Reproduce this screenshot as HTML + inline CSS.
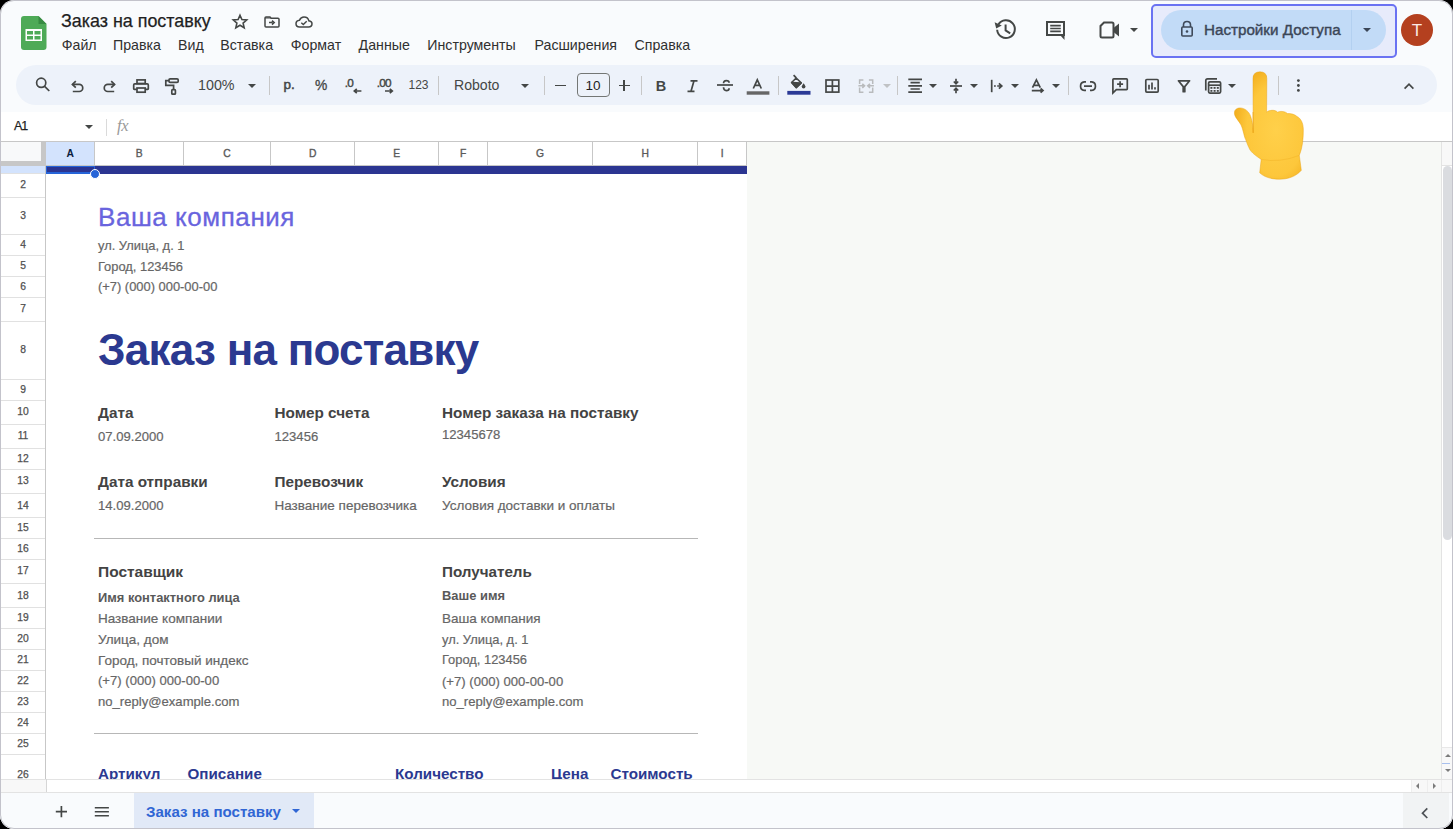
<!DOCTYPE html>
<html><head><meta charset="utf-8">
<style>
*{box-sizing:border-box;margin:0;padding:0}
html,body{width:1453px;height:829px;overflow:hidden;background:#000}
body{font-family:"Liberation Sans",sans-serif;position:relative}
#win{position:absolute;left:0;top:0;width:1453px;height:829px;border-radius:14px;overflow:hidden;background:#f9fbfd}
#frame{position:absolute;left:0;top:0;width:1453px;height:829px;border-radius:14px;border:1px solid #c3c3cb;pointer-events:none}
.a{position:absolute}
.t{position:absolute;white-space:nowrap;line-height:1}
svg{position:absolute;overflow:visible}
.ic{fill:none;stroke:#444746;stroke-width:2}
.sep{position:absolute;width:1px;background:#c7c7c7}
.dd{position:absolute;width:0;height:0;border-left:4px solid transparent;border-right:4px solid transparent;border-top:4px solid #444746}
</style></head><body>
<div id="win">
  <!-- ============ HEADER ============ -->
  <!-- sheets logo -->
  <svg style="left:21px;top:16px" width="26" height="34" viewBox="0 0 26 34">
    <path d="M3 0 H17.5 L25.5 8 V31 Q25.5 34 22.5 34 H3 Q0 34 0 31 V3 Q0 0 3 0Z" fill="#4eaa57"/>
    <path d="M17.5 0 V8 H25.5Z" fill="#378b42"/>
    <rect x="4.5" y="13" width="16.5" height="12" fill="#fff"/>
    <rect x="6" y="15" width="6" height="3.5" fill="#4eaa57"/>
    <rect x="13.5" y="15" width="6" height="3.5" fill="#4eaa57"/>
    <rect x="6" y="20" width="6" height="3.5" fill="#4eaa57"/>
    <rect x="13.5" y="20" width="6" height="3.5" fill="#4eaa57"/>
  </svg>
  <div class="t" style="left:61px;top:13px;font-size:17.9px;color:#1f1f1f;-webkit-text-stroke:0.25px #1f1f1f">Заказ на поставку</div>
  <!-- star -->
  <svg style="left:232px;top:14px" width="16" height="15" viewBox="0 0 16 15">
    <path d="M8 1.2 L9.9 5.6 L14.7 6 L11.1 9.1 L12.2 13.8 L8 11.3 L3.8 13.8 L4.9 9.1 L1.3 6 L6.1 5.6Z" fill="none" stroke="#444746" stroke-width="1.6" stroke-linejoin="miter"/>
  </svg>
  <!-- folder move -->
  <svg style="left:264px;top:16px" width="16" height="12" viewBox="0 0 16 12">
    <path d="M1 2 Q1 1 2 1 H6 L7.2 2.2 H14 Q15 2.2 15 3.2 V10 Q15 11 14 11 H2 Q1 11 1 10Z" fill="none" stroke="#444746" stroke-width="1.5"/>
    <path d="M1 1.5 H6 L7.2 2.6 H1Z" fill="#444746"/>
    <path d="M5 6.6 H8.6 M8 4.6 L10.2 6.6 L8 8.6" fill="none" stroke="#444746" stroke-width="1.5"/>
  </svg>
  <!-- cloud done -->
  <svg style="left:295px;top:16px" width="18" height="12" viewBox="0 0 18 12">
    <path d="M4.5 11 H13.5 Q17 11 17 7.8 Q17 5 13.8 4.7 Q13 1 9 1 Q5.8 1 4.5 4.3 Q1 4.6 1 7.8 Q1 11 4.5 11Z" fill="none" stroke="#444746" stroke-width="1.5"/>
    <path d="M6.3 6.8 L8.3 8.6 L11.7 5.2" fill="none" stroke="#444746" stroke-width="1.4"/>
  </svg>
  <!-- menu -->
  <div class="t" style="left:62px;top:38px;font-size:14.2px;color:#303030">
    <span class="a" style="left:-0.3px">Файл</span><span class="a" style="left:51.0px">Правка</span><span class="a" style="left:116.0px">Вид</span><span class="a" style="left:158.3px">Вставка</span><span class="a" style="left:228.8px">Формат</span><span class="a" style="left:296.6px">Данные</span><span class="a" style="left:365.3px">Инструменты</span><span class="a" style="left:472.5px">Расширения</span><span class="a" style="left:572.5px">Справка</span></div>

  <!-- right header icons -->
  <!-- history -->
  <svg style="left:990px;top:15px" width="30" height="30" viewBox="990 15 30 30">
    <path d="M998.4 24.6 A8.85 8.85 0 1 1 997.15 29.8" fill="none" stroke="#444746" stroke-width="2"/>
    <path d="M994.6 22.2 L996.2 28.6 L1001.8 25.4Z" fill="#444746"/>
    <path d="M1005.6 24.4 V30.4 L1010.2 33.4" fill="none" stroke="#444746" stroke-width="2"/>
  </svg>
  <!-- comments -->
  <svg style="left:1045px;top:20px" width="22" height="22" viewBox="0 0 22 22">
    <path d="M2 2 H19 V15 H2Z" fill="none" stroke="#444746" stroke-width="2"/>
    <path d="M15 15 L19.5 20 V15Z" fill="#444746"/>
    <path d="M5.2 5.6 H15.8 M5.2 8.5 H15.8 M5.2 11.4 H15.8" stroke="#444746" stroke-width="1.7"/>
  </svg>
  <!-- meet -->
  <svg style="left:1099px;top:21px" width="22" height="18" viewBox="0 0 22 18">
    <path d="M5 1.5 H13 Q14.5 1.5 14.5 3 V15 Q14.5 16.5 13 16.5 H3 Q1.5 16.5 1.5 15 V5Z" fill="none" stroke="#444746" stroke-width="2"/>
    <path d="M14.5 7 L20 2.5 V15.5 L14.5 11Z" fill="#444746"/>
  </svg>
  <div class="dd" style="left:1130px;top:28px"></div>

  <!-- share highlight -->
  <div class="a" style="left:1151px;top:4px;width:246px;height:54px;border:2px solid #6a72f2;border-radius:5px;background:#e7ebfb"></div>
  <div class="a" style="left:1160.5px;top:10px;width:225px;height:40px;border-radius:20px;background:#c2dbf7"></div>
  <div class="a" style="left:1351px;top:10px;width:1px;height:40px;background:#b3d0f0"></div>
  <svg style="left:1180px;top:20px" width="14" height="18" viewBox="0 0 14 18">
    <path d="M3.5 7 V4.8 Q3.5 1.5 7 1.5 Q10.5 1.5 10.5 4.8 V7" fill="none" stroke="#3f4a5a" stroke-width="1.6"/>
    <rect x="1.8" y="7" width="10.4" height="9" rx="1" fill="none" stroke="#3f4a5a" stroke-width="1.6"/>
    <circle cx="7" cy="11.5" r="1.3" fill="#3f4a5a"/>
  </svg>
  <div class="t" style="left:1204px;top:22px;font-size:15.2px;-webkit-text-stroke:0.4px #3b4657;color:#3b4657">Настройки Доступа</div>
  <div class="dd" style="left:1363.4px;top:28px;border-top-color:#3b4657"></div>
  <!-- avatar -->
  <div class="a" style="left:1401px;top:14px;width:32px;height:32px;border-radius:50%;background:#b4401f"></div>
  <div class="t" style="left:1401px;top:22px;width:32px;text-align:center;font-size:17px;color:#fbe9e4">T</div>

  <!-- ============ TOOLBAR ============ -->
  <div class="a" style="left:16px;top:65px;width:1421px;height:40px;border-radius:20px;background:#edf2fa"></div>
  <svg style="left:30px;top:70px" width="30" height="30" viewBox="30 70 30 30"><circle cx="41.2" cy="82.8" r="4.6" fill="none" stroke="#444746" stroke-width="1.7"/><path d="M44.6 86.3 L49.3 91" fill="none" stroke="#444746" stroke-width="1.7" stroke-width="2"/></svg>
<svg style="left:65px;top:75px" width="25" height="22" viewBox="65 75 25 22"><path d="M72.5 84.4 H79.2 A3.55 3.55 0 0 1 79.2 91.5 H72.8" fill="none" stroke="#444746" stroke-width="1.7"/><path d="M75.8 81.1 L72.4 84.4 L75.8 87.7" fill="none" stroke="#444746" stroke-width="1.7"/></svg>
<svg style="left:97px;top:75px" width="25" height="22" viewBox="97 75 25 22"><path d="M114.5 84.4 H107.8 A3.55 3.55 0 0 0 107.8 91.5 H114.2" fill="none" stroke="#444746" stroke-width="1.7"/><path d="M111.2 81.1 L114.6 84.4 L111.2 87.7" fill="none" stroke="#444746" stroke-width="1.7"/></svg>
<svg style="left:128px;top:74px" width="26" height="24" viewBox="128 74 26 24"><rect x="137" y="79.9" width="8.2" height="3.6" fill="none" stroke="#444746" stroke-width="1.7" stroke-width="1.5"/><path d="M136.8 89.3 H134.3 Q133.7 89.3 133.7 88.7 V85 Q133.7 83.9 134.8 83.9 H147.2 Q148.3 83.9 148.3 85 V88.7 Q148.3 89.3 147.7 89.3 H145.4" fill="none" stroke="#444746" stroke-width="1.7" stroke-width="1.5"/><rect x="137" y="88" width="8.2" height="4.2" fill="none" stroke="#444746" stroke-width="1.7" stroke-width="1.5"/></svg>
<svg style="left:160px;top:74px" width="24" height="24" viewBox="160 74 24 24"><rect x="169" y="78.8" width="9.2" height="3.6" rx="1.2" fill="none" stroke="#444746" stroke-width="1.7" stroke-width="1.5"/><path d="M169 80.6 H165.8 V85.4 H173.6 V89.4" fill="none" stroke="#444746" stroke-width="1.7" stroke-width="1.5"/><rect x="171.8" y="89.6" width="3.6" height="4.6" rx="0.8" fill="none" stroke="#444746" stroke-width="1.7" stroke-width="1.5"/></svg>
<div class="t" style="left:198.00px;top:78px;font-size:14.3px;color:#444746;">100%</div>
<div class="dd" style="left:248.0px;top:83.5px;border-left-width:4px;border-right-width:4px;border-top:4px solid #444746"></div>
<div class="a" style="left:268.7px;top:75.5px;width:1px;height:19.0px;background:#c7c7c7"></div>
<div class="t" style="left:283.50px;top:78px;font-size:13.5px;color:#444746;-webkit-text-stroke:0.5px #444746;">р.</div>
<div class="t" style="left:315.00px;top:79px;font-size:13.8px;color:#444746;-webkit-text-stroke:0.3px #444746;">%</div>
<div class="t" style="left:344.80px;top:78px;font-size:11.8px;color:#444746;-webkit-text-stroke:0.4px #444746;letter-spacing:-0.8px;">.0</div>
<svg style="left:350px;top:86px" width="14" height="8" viewBox="350 86 14 8"><path d="M361.4 91 H354.5 M356.8 88.8 L354.3 91 L356.8 93.2" fill="none" stroke="#444746" stroke-width="1.7" stroke-width="1.5"/></svg>
<div class="t" style="left:376.80px;top:78px;font-size:11.8px;color:#444746;-webkit-text-stroke:0.4px #444746;letter-spacing:-0.8px;">.00</div>
<svg style="left:382px;top:86px" width="14" height="8" viewBox="382 86 14 8"><path d="M385 91 H392 M389.8 88.8 L392.3 91 L389.8 93.2" fill="none" stroke="#444746" stroke-width="1.7" stroke-width="1.5"/></svg>
<div class="t" style="left:408.50px;top:79px;font-size:12px;color:#444746;">123</div>
<div class="a" style="left:438.0px;top:75.5px;width:1px;height:19.0px;background:#c7c7c7"></div>
<div class="t" style="left:454.00px;top:78px;font-size:14.1px;color:#444746;">Roboto</div>
<div class="dd" style="left:521.0px;top:83.5px;border-left-width:4px;border-right-width:4px;border-top:4px solid #444746"></div>
<div class="a" style="left:543.9px;top:75.5px;width:1px;height:19.0px;background:#c7c7c7"></div>
<div class="a" style="left:555px;top:84.7px;width:11px;height:1.7px;background:#444746"></div>
<div class="a" style="left:576.6px;top:73px;width:33px;height:24px;border:1px solid #747775;border-radius:4px"></div>
<div class="t" style="left:585.50px;top:79px;font-size:13.5px;color:#1f1f1f;">10</div>
<div class="a" style="left:618.8px;top:84.7px;width:11px;height:1.7px;background:#444746"></div><div class="a" style="left:623.45px;top:80px;width:1.7px;height:11px;background:#444746"></div>
<div class="a" style="left:640.8px;top:75.5px;width:1px;height:19.0px;background:#c7c7c7"></div>
<div class="t" style="left:655.80px;top:79px;font-size:14.5px;color:#444746;font-weight:bold;">B</div>
<svg style="left:684px;top:78px" width="16" height="16" viewBox="684 78 16 16"><path d="M690.5 80.8 H697.5 M687.5 91.3 H694.5 M694 80.8 L691 91.3" fill="none" stroke="#444746" stroke-width="1.7" stroke-width="1.9"/></svg>
<svg style="left:714px;top:77px" width="22" height="17" viewBox="714 77 22 17"><path d="M717 85 H733" fill="none" stroke="#444746" stroke-width="1.7" stroke-width="1.6"/><path d="M723.6 83.3 Q723.4 80.6 726.3 80.6 Q729.1 80.6 729.1 82.7" fill="none" stroke="#444746" stroke-width="1.7" stroke-width="1.6"/><path d="M723.5 87.3 Q723.7 90.6 726.3 90.6 Q729.1 90.6 729.1 88.2" fill="none" stroke="#444746" stroke-width="1.7" stroke-width="1.6"/></svg>
<svg style="left:745px;top:77px" width="26" height="19" viewBox="745 77 26 19"><path d="M753.3 88.5 L757.3 79.8 L761.3 88.5 M754.8 85.4 H759.8" fill="none" stroke="#444746" stroke-width="1.7" stroke-width="1.6"/><rect x="746.7" y="91.3" width="22.7" height="3.4" fill="#666"/></svg>
<div class="a" style="left:777.9px;top:75.5px;width:1px;height:19.0px;background:#c7c7c7"></div>
<svg style="left:786px;top:72px" width="26" height="24" viewBox="786 72 26 24"><path d="M793.6 75.2 L796.3 77.9" fill="none" stroke="#444746" stroke-width="1.7" stroke-width="1.5"/><path d="M796.2 78 L801.2 82.9 L796.3 87.6 L791.6 82.5Z" fill="none" stroke="#444746" stroke-width="1.6" stroke-linejoin="round"/><path d="M791.6 82.5 L801.2 82.9 L796.3 87.6Z" fill="#444746" stroke="#444746" stroke-width="1.4" stroke-linejoin="round"/><path d="M803.6 83.2 Q805.5 85.6 805.5 86.6 A1.9 1.9 0 0 1 801.7 86.6 Q801.7 85.6 803.6 83.2Z" fill="#444746"/><rect x="787.3" y="90.9" width="23.2" height="3.8" fill="#2b3a96"/></svg>
<svg style="left:823px;top:77px" width="18" height="18" viewBox="823 77 18 18"><rect x="826" y="80" width="12.8" height="12.1" fill="none" stroke="#444746" stroke-width="1.7" stroke-width="1.6"/><path d="M832.4 80 V92.1 M826 86.05 H838.8" fill="none" stroke="#444746" stroke-width="1.7" stroke-width="1.6"/></svg>
<svg style="left:856px;top:77px" width="20" height="18" viewBox="856 77 20 18"><path d="M863.4 79.9 H859.6 V84 M859.6 87.6 V92.2 H863.4 M868.9 79.9 H872.7 V84 M872.7 87.6 V92.2 H868.9" fill="none" stroke="#b9bbbd" stroke-width="1.5"/><path d="M858.4 85.8 H864.2 M862.3 83.8 L864.5 85.8 L862.3 87.8 M873.9 85.8 H868.1 M870 83.8 L867.8 85.8 L870 87.8" fill="none" stroke="#b9bbbd" stroke-width="1.6"/></svg>
<div class="dd" style="left:883.0px;top:83.5px;border-left-width:4px;border-right-width:4px;border-top:4px solid #c0c2c4"></div>
<div class="a" style="left:897.1px;top:75.5px;width:1px;height:19.0px;background:#c7c7c7"></div>
<svg style="left:906px;top:77px" width="18" height="18" viewBox="906 77 18 18"><path d="M908.3 79.3 H922 M910.5 82.6 H919.8 M908.3 85.8 H922 M910.5 89 H919.8 M908.3 92.2 H922" fill="none" stroke="#444746" stroke-width="1.7" stroke-width="1.5"/></svg>
<div class="dd" style="left:929.0px;top:83.5px;border-left-width:4px;border-right-width:4px;border-top:4px solid #444746"></div>
<svg style="left:948px;top:77px" width="16" height="18" viewBox="948 77 16 18"><path d="M950 86 H962" fill="none" stroke="#444746" stroke-width="1.7" stroke-width="1.5"/><path d="M956 78.8 V83.5 M953.8 81.5 L956 83.8 L958.2 81.5 M956 93.2 V88.5 M953.8 90.5 L956 88.2 L958.2 90.5" fill="none" stroke="#444746" stroke-width="1.7" stroke-width="1.5"/></svg>
<div class="dd" style="left:970.2px;top:83.5px;border-left-width:4px;border-right-width:4px;border-top:4px solid #444746"></div>
<svg style="left:989px;top:77px" width="16" height="18" viewBox="989 77 16 18"><path d="M991.7 79.8 V92.2" fill="none" stroke="#444746" stroke-width="1.7" stroke-width="1.8"/><path d="M994 86 H995.8 M997.2 86 H1001.5 M998.9 83.3 L1001.8 86 L998.9 88.7" fill="none" stroke="#444746" stroke-width="1.7" stroke-width="1.5"/></svg>
<div class="dd" style="left:1011.2px;top:83.5px;border-left-width:4px;border-right-width:4px;border-top:4px solid #444746"></div>
<svg style="left:1029px;top:77px" width="18" height="18" viewBox="1029 77 18 18"><path d="M1032.5 87.6 L1036.4 79.9 L1040.3 87.6 M1033.7 85.3 H1039.1" fill="none" stroke="#444746" stroke-width="1.7" stroke-width="1.5"/><path d="M1031.8 90.6 H1042.8 M1040.6 88.5 L1043 90.6 L1040.6 92.7" fill="none" stroke="#444746" stroke-width="1.7" stroke-width="1.5"/></svg>
<div class="dd" style="left:1052.0px;top:83.5px;border-left-width:4px;border-right-width:4px;border-top:4px solid #444746"></div>
<div class="a" style="left:1068.0px;top:75.5px;width:1px;height:19.0px;background:#c7c7c7"></div>
<svg style="left:1077px;top:78px" width="22" height="16" viewBox="1077 78 22 16"><path d="M1086 81.9 H1084.2 A4.3 4.3 0 0 0 1084.2 90.4 H1086 M1090 81.9 H1091.8 A4.3 4.3 0 0 1 1091.8 90.4 H1090 M1084 86.15 H1092" fill="none" stroke="#444746" stroke-width="1.7" stroke-width="1.7"/></svg>
<svg style="left:1110px;top:76px" width="20" height="20" viewBox="1110 76 20 20"><path d="M1112.9 93 V79.6 Q1112.9 78.8 1113.7 78.8 H1126.5 Q1127.3 78.8 1127.3 79.6 V88.8 Q1127.3 89.6 1126.5 89.6 H1116.3Z" fill="none" stroke="#444746" stroke-width="1.7" stroke-width="1.6"/><path d="M1120.1 81.2 V87.2 M1117.1 84.2 H1123.1" fill="none" stroke="#444746" stroke-width="1.7" stroke-width="1.7"/></svg>
<svg style="left:1143px;top:77px" width="18" height="18" viewBox="1143 77 18 18"><rect x="1145.8" y="79.5" width="12.4" height="12.6" rx="1" fill="none" stroke="#444746" stroke-width="1.7" stroke-width="1.6"/><path d="M1149 84.8 V89.5 M1152 82.5 V89.5 M1155 87.3 V89.5" fill="none" stroke="#444746" stroke-width="1.7" stroke-width="1.6"/></svg>
<svg style="left:1176px;top:78px" width="16" height="16" viewBox="1176 78 16 16"><path d="M1178.4 80.8 H1189.6 L1184.8 86.6 V91.7 H1183.2 V86.6Z" fill="none" stroke="#444746" stroke-width="1.7" stroke-width="1.6" stroke-linejoin="round"/></svg>
<svg style="left:1203px;top:76px" width="21" height="20" viewBox="1203 76 21 20"><path d="M1205.8 90.5 V80.6 Q1205.8 78.8 1207.6 78.8 H1217" fill="none" stroke="#444746" stroke-width="1.7" stroke-width="1.5"/><rect x="1208.6" y="81.8" width="12" height="11.3" rx="1.3" fill="none" stroke="#444746" stroke-width="1.7" stroke-width="1.5"/><path d="M1208.8 85.2 H1220.4" fill="none" stroke="#444746" stroke-width="1.7" stroke-width="1.5"/><g fill="#444746"><rect x="1210.4" y="87" width="2" height="1.8"/><rect x="1213.6" y="87" width="2" height="1.8"/><rect x="1216.8" y="87" width="2" height="1.8"/><rect x="1210.4" y="90" width="2" height="1.8"/><rect x="1213.6" y="90" width="2" height="1.8"/><rect x="1216.8" y="90" width="2" height="1.8"/></g></svg>
<div class="dd" style="left:1227.7px;top:83.5px;border-left-width:4px;border-right-width:4px;border-top:4px solid #444746"></div>
<div class="a" style="left:1278.2px;top:75.5px;width:1px;height:19.0px;background:#c7c7c7"></div>
<svg style="left:1294px;top:78px" width="9" height="16" viewBox="1294 78 9 16"><circle cx="1298.4" cy="80.6" r="1.4" fill="#444746"/><circle cx="1298.4" cy="85.5" r="1.4" fill="#444746"/><circle cx="1298.4" cy="90.4" r="1.4" fill="#444746"/></svg>
<svg style="left:1400px;top:78px" width="18" height="14" viewBox="1400 78 18 14"><path d="M1404.6 88.6 L1409 84.2 L1413.4 88.6" fill="none" stroke="#444746" stroke-width="1.7" stroke-width="1.8"/></svg>


  <!-- ============ FORMULA BAR ============ -->
  <div class="a" style="left:0;top:112px;width:1453px;height:29px;background:#fff"></div>
  <div class="a" style="left:0;top:141px;width:1453px;height:1px;background:#c7c7c7"></div>
  <div class="t" style="left:14px;top:120px;font-size:12.5px;color:#1f1f1f;letter-spacing:-1.2px;-webkit-text-stroke:0.25px #1f1f1f">A1</div>
  <div class="dd" style="left:85px;top:125px"></div>
  <div class="sep" style="left:106px;top:119px;height:17px;background:#dadada"></div>
  <div class="t" style="left:117px;top:117.5px;font-size:16.5px;font-family:'Liberation Serif',serif;font-style:italic;color:#999;letter-spacing:-0.3px">fx</div>

  <!-- ============ GRID ============ -->
  <div class="a" style="left:747px;top:142px;width:695px;height:637px;background:#f7f9f6"></div>
<div class="a" style="left:46px;top:165px;width:701px;height:614px;background:#fff"></div>
<div class="a" style="left:46px;top:142px;width:701px;height:23.5px;background:#fff"></div>
<div class="a" style="left:46px;top:142px;width:48.6px;height:23.5px;background:#d3e3fd"></div>
<div class="a" style="left:94.1px;top:142px;width:1px;height:23.5px;background:#c7c7c7"></div>
<div class="t" style="left:46.0px;width:48.6px;text-align:center;top:148.5px;font-size:10.3px;color:#0b1c3d;font-weight:bold;">A</div>
<div class="a" style="left:183.2px;top:142px;width:1px;height:23.5px;background:#c7c7c7"></div>
<div class="t" style="left:94.6px;width:89.1px;text-align:center;top:148.5px;font-size:10.3px;color:#5a5a5a;-webkit-text-stroke:0.35px #5a5a5a;">B</div>
<div class="a" style="left:270.0px;top:142px;width:1px;height:23.5px;background:#c7c7c7"></div>
<div class="t" style="left:183.7px;width:86.8px;text-align:center;top:148.5px;font-size:10.3px;color:#5a5a5a;-webkit-text-stroke:0.35px #5a5a5a;">C</div>
<div class="a" style="left:354.3px;top:142px;width:1px;height:23.5px;background:#c7c7c7"></div>
<div class="t" style="left:270.5px;width:84.3px;text-align:center;top:148.5px;font-size:10.3px;color:#5a5a5a;-webkit-text-stroke:0.35px #5a5a5a;">D</div>
<div class="a" style="left:438.3px;top:142px;width:1px;height:23.5px;background:#c7c7c7"></div>
<div class="t" style="left:354.8px;width:84.0px;text-align:center;top:148.5px;font-size:10.3px;color:#5a5a5a;-webkit-text-stroke:0.35px #5a5a5a;">E</div>
<div class="a" style="left:487.0px;top:142px;width:1px;height:23.5px;background:#c7c7c7"></div>
<div class="t" style="left:438.8px;width:48.7px;text-align:center;top:148.5px;font-size:10.3px;color:#5a5a5a;-webkit-text-stroke:0.35px #5a5a5a;">F</div>
<div class="a" style="left:592.1px;top:142px;width:1px;height:23.5px;background:#c7c7c7"></div>
<div class="t" style="left:487.5px;width:105.1px;text-align:center;top:148.5px;font-size:10.3px;color:#5a5a5a;-webkit-text-stroke:0.35px #5a5a5a;">G</div>
<div class="a" style="left:697.2px;top:142px;width:1px;height:23.5px;background:#c7c7c7"></div>
<div class="t" style="left:592.6px;width:105.1px;text-align:center;top:148.5px;font-size:10.3px;color:#5a5a5a;-webkit-text-stroke:0.35px #5a5a5a;">H</div>
<div class="a" style="left:746.3px;top:142px;width:1px;height:23.5px;background:#c7c7c7"></div>
<div class="t" style="left:697.7px;width:49.1px;text-align:center;top:148.5px;font-size:10.3px;color:#5a5a5a;-webkit-text-stroke:0.35px #5a5a5a;">I</div>
<div class="a" style="left:46px;top:165px;width:701px;height:1px;background:#c7c7c7"></div>
<div class="a" style="left:0;top:142px;width:46px;height:23.5px;background:#f8f9fa"></div>
<div class="a" style="left:41px;top:142px;width:4.5px;height:23.5px;background:#c7c7c7"></div>
<div class="a" style="left:0;top:161px;width:45.5px;height:4.5px;background:#c7c7c7"></div>
<div class="a" style="left:0;top:165.5px;width:46px;height:613.5px;background:#fff"></div>
<div class="a" style="left:0;top:165.5px;width:46px;height:8.1px;background:#d3e3fd"></div>
<div class="a" style="left:0;top:173.1px;width:46px;height:1px;background:#e1e1e1"></div>
<div class="a" style="left:0;top:197.0px;width:46px;height:1px;background:#e1e1e1"></div>
<div class="a" style="left:0;top:233.9px;width:46px;height:1px;background:#e1e1e1"></div>
<div class="a" style="left:0;top:254.9px;width:46px;height:1px;background:#e1e1e1"></div>
<div class="a" style="left:0;top:276.1px;width:46px;height:1px;background:#e1e1e1"></div>
<div class="a" style="left:0;top:296.9px;width:46px;height:1px;background:#e1e1e1"></div>
<div class="a" style="left:0;top:321.0px;width:46px;height:1px;background:#e1e1e1"></div>
<div class="a" style="left:0;top:379.0px;width:46px;height:1px;background:#e1e1e1"></div>
<div class="a" style="left:0;top:399.9px;width:46px;height:1px;background:#e1e1e1"></div>
<div class="a" style="left:0;top:424.0px;width:46px;height:1px;background:#e1e1e1"></div>
<div class="a" style="left:0;top:448.1px;width:46px;height:1px;background:#e1e1e1"></div>
<div class="a" style="left:0;top:468.9px;width:46px;height:1px;background:#e1e1e1"></div>
<div class="a" style="left:0;top:493.0px;width:46px;height:1px;background:#e1e1e1"></div>
<div class="a" style="left:0;top:517.2px;width:46px;height:1px;background:#e1e1e1"></div>
<div class="a" style="left:0;top:538.1px;width:46px;height:1px;background:#e1e1e1"></div>
<div class="a" style="left:0;top:558.9px;width:46px;height:1px;background:#e1e1e1"></div>
<div class="a" style="left:0;top:583.0px;width:46px;height:1px;background:#e1e1e1"></div>
<div class="a" style="left:0;top:607.2px;width:46px;height:1px;background:#e1e1e1"></div>
<div class="a" style="left:0;top:628.1px;width:46px;height:1px;background:#e1e1e1"></div>
<div class="a" style="left:0;top:648.9px;width:46px;height:1px;background:#e1e1e1"></div>
<div class="a" style="left:0;top:669.8px;width:46px;height:1px;background:#e1e1e1"></div>
<div class="a" style="left:0;top:691.1px;width:46px;height:1px;background:#e1e1e1"></div>
<div class="a" style="left:0;top:711.9px;width:46px;height:1px;background:#e1e1e1"></div>
<div class="a" style="left:0;top:733.0px;width:46px;height:1px;background:#e1e1e1"></div>
<div class="a" style="left:0;top:754.2px;width:46px;height:1px;background:#e1e1e1"></div>
<div class="t" style="left:0;width:46px;text-align:center;top:180.4px;font-size:10.3px;color:#505050;-webkit-text-stroke:0.25px #505050">2</div>
<div class="t" style="left:0;width:46px;text-align:center;top:210.8px;font-size:10.3px;color:#505050;-webkit-text-stroke:0.25px #505050">3</div>
<div class="t" style="left:0;width:46px;text-align:center;top:239.8px;font-size:10.3px;color:#505050;-webkit-text-stroke:0.25px #505050">4</div>
<div class="t" style="left:0;width:46px;text-align:center;top:260.9px;font-size:10.3px;color:#505050;-webkit-text-stroke:0.25px #505050">5</div>
<div class="t" style="left:0;width:46px;text-align:center;top:281.9px;font-size:10.3px;color:#505050;-webkit-text-stroke:0.25px #505050">6</div>
<div class="t" style="left:0;width:46px;text-align:center;top:304.3px;font-size:10.3px;color:#505050;-webkit-text-stroke:0.25px #505050">7</div>
<div class="t" style="left:0;width:46px;text-align:center;top:345.4px;font-size:10.3px;color:#505050;-webkit-text-stroke:0.25px #505050">8</div>
<div class="t" style="left:0;width:46px;text-align:center;top:384.8px;font-size:10.3px;color:#505050;-webkit-text-stroke:0.25px #505050">9</div>
<div class="t" style="left:0;width:46px;text-align:center;top:407.3px;font-size:10.3px;color:#505050;-webkit-text-stroke:0.25px #505050">10</div>
<div class="t" style="left:0;width:46px;text-align:center;top:431.4px;font-size:10.3px;color:#505050;-webkit-text-stroke:0.25px #505050">11</div>
<div class="t" style="left:0;width:46px;text-align:center;top:453.9px;font-size:10.3px;color:#505050;-webkit-text-stroke:0.25px #505050">12</div>
<div class="t" style="left:0;width:46px;text-align:center;top:476.3px;font-size:10.3px;color:#505050;-webkit-text-stroke:0.25px #505050">13</div>
<div class="t" style="left:0;width:46px;text-align:center;top:500.5px;font-size:10.3px;color:#505050;-webkit-text-stroke:0.25px #505050">14</div>
<div class="t" style="left:0;width:46px;text-align:center;top:523.0px;font-size:10.3px;color:#505050;-webkit-text-stroke:0.25px #505050">15</div>
<div class="t" style="left:0;width:46px;text-align:center;top:543.9px;font-size:10.3px;color:#505050;-webkit-text-stroke:0.25px #505050">16</div>
<div class="t" style="left:0;width:46px;text-align:center;top:566.3px;font-size:10.3px;color:#505050;-webkit-text-stroke:0.25px #505050">17</div>
<div class="t" style="left:0;width:46px;text-align:center;top:590.5px;font-size:10.3px;color:#505050;-webkit-text-stroke:0.25px #505050">18</div>
<div class="t" style="left:0;width:46px;text-align:center;top:613.0px;font-size:10.3px;color:#505050;-webkit-text-stroke:0.25px #505050">19</div>
<div class="t" style="left:0;width:46px;text-align:center;top:633.9px;font-size:10.3px;color:#505050;-webkit-text-stroke:0.25px #505050">20</div>
<div class="t" style="left:0;width:46px;text-align:center;top:654.7px;font-size:10.3px;color:#505050;-webkit-text-stroke:0.25px #505050">21</div>
<div class="t" style="left:0;width:46px;text-align:center;top:675.8px;font-size:10.3px;color:#505050;-webkit-text-stroke:0.25px #505050">22</div>
<div class="t" style="left:0;width:46px;text-align:center;top:696.9px;font-size:10.3px;color:#505050;-webkit-text-stroke:0.25px #505050">23</div>
<div class="t" style="left:0;width:46px;text-align:center;top:717.8px;font-size:10.3px;color:#505050;-webkit-text-stroke:0.25px #505050">24</div>
<div class="t" style="left:0;width:46px;text-align:center;top:739.0px;font-size:10.3px;color:#505050;-webkit-text-stroke:0.25px #505050">25</div>
<div class="t" style="left:0;width:46px;text-align:center;top:769.8px;font-size:10.3px;color:#505050;-webkit-text-stroke:0.25px #505050">26</div>
<div class="a" style="left:45px;top:165.5px;width:1px;height:613.5px;background:#c7c7c7"></div>
<div class="a" style="left:46px;top:166.2px;width:701px;height:7.6px;background:#2b3591"></div>
<div class="a" style="left:46px;top:165.5px;width:49px;height:8.5px;border:1.2px solid #2664d8;border-bottom-width:2px"></div>
<div class="a" style="left:90px;top:169px;width:10px;height:10px;border-radius:50%;background:#2664d8;border:1.2px solid #fff"></div>
<div class="a" style="left:1441px;top:142px;width:12px;height:637px;background:#fff;border-left:1px solid #e3e3e3"></div>
<div class="a" style="left:1441px;top:142px;width:12px;height:23.5px;background:#f8f8f8;border-left:1px solid #e3e3e3;border-bottom:1px solid #e3e3e3"></div>
<div class="a" style="left:1443px;top:166px;width:8.5px;height:374px;border-radius:5px;background:#dadce0"></div>
<div class="a" style="left:1441px;top:747px;width:12px;height:32px;background:#f8f8f8;border-left:1px solid #e3e3e3;border-top:1px solid #e8e8e8"></div>
<div class="a" style="left:1442px;top:763px;width:8px;height:1px;background:#a8c0ee"></div>
<div class="a" style="left:1444.8px;top:753.5px;width:0;height:0;border-left:3.5px solid transparent;border-right:3.5px solid transparent;border-bottom:3.5px solid #7b7b7b"></div>
<div class="a" style="left:1444.8px;top:769px;width:0;height:0;border-left:3.5px solid transparent;border-right:3.5px solid transparent;border-top:3.5px solid #7b7b7b"></div>
<div class="a" style="left:0;top:779px;width:1453px;height:13px;background:#fff;border-top:1px solid #e3e3e3"></div>
<div class="a" style="left:0;top:779px;width:46px;height:13px;background:#f8f8f8;border-top:1px solid #e3e3e3"></div>
<div class="a" style="left:45.5px;top:779px;width:1px;height:13px;background:#d6d6d6"></div>
<div class="a" style="left:1410.7px;top:780px;width:42px;height:12px;background:#f8f8f8;border-left:1px solid #eee"></div>
<div class="a" style="left:1426.6px;top:780px;width:1px;height:12px;background:#eee"></div>
<div class="a" style="left:1441px;top:780px;width:1px;height:12px;background:#eee"></div>
<div class="a" style="left:1416px;top:782.5px;width:0;height:0;border-top:3.5px solid transparent;border-bottom:3.5px solid transparent;border-right:3.5px solid #7b7b7b"></div>
<div class="a" style="left:1433px;top:782.5px;width:0;height:0;border-top:3.5px solid transparent;border-bottom:3.5px solid transparent;border-left:3.5px solid #7b7b7b"></div>
<div class="t" style="left:98.00px;top:204px;font-size:26px;color:#6964de;letter-spacing:0.55px;-webkit-text-stroke:0.3px #6964de;">Ваша компания</div>
<div class="t" style="left:98.00px;top:240px;font-size:12.9px;color:#666666;-webkit-text-stroke:0.2px #666;">ул. Улица, д. 1</div>
<div class="t" style="left:98.00px;top:261px;font-size:12.9px;color:#666666;-webkit-text-stroke:0.2px #666;">Город, 123456</div>
<div class="t" style="left:98.00px;top:281px;font-size:12.9px;color:#666666;-webkit-text-stroke:0.2px #666;">(+7) (000) 000-00-00</div>
<div class="t" style="left:98.00px;top:328px;font-size:44px;color:#2b3990;font-weight:bold;letter-spacing:-0.75px;">Заказ на поставку</div>
<div class="t" style="left:98.00px;top:405px;font-size:15.3px;color:#434343;font-weight:bold;">Дата</div>
<div class="t" style="left:274.50px;top:405px;font-size:15.3px;color:#434343;font-weight:bold;">Номер счета</div>
<div class="t" style="left:442.00px;top:405px;font-size:15.3px;color:#434343;font-weight:bold;">Номер заказа на поставку</div>
<div class="t" style="left:98.00px;top:430px;font-size:13.1px;color:#666666;-webkit-text-stroke:0.2px #666;">07.09.2000</div>
<div class="t" style="left:274.50px;top:430px;font-size:13.1px;color:#666666;-webkit-text-stroke:0.2px #666;">123456</div>
<div class="t" style="left:442.00px;top:428px;font-size:13.1px;color:#666666;-webkit-text-stroke:0.2px #666;">12345678</div>
<div class="t" style="left:98.00px;top:474px;font-size:15.3px;color:#434343;font-weight:bold;">Дата отправки</div>
<div class="t" style="left:274.50px;top:474px;font-size:15.3px;color:#434343;font-weight:bold;">Перевозчик</div>
<div class="t" style="left:442.00px;top:474px;font-size:15.3px;color:#434343;font-weight:bold;">Условия</div>
<div class="t" style="left:98.00px;top:499px;font-size:13.1px;color:#666666;-webkit-text-stroke:0.2px #666;">14.09.2000</div>
<div class="t" style="left:274.50px;top:499px;font-size:13.5px;color:#666666;-webkit-text-stroke:0.2px #666;">Название перевозчика</div>
<div class="t" style="left:442.00px;top:499px;font-size:13.5px;color:#666666;-webkit-text-stroke:0.2px #666;">Условия доставки и оплаты</div>
<div class="a" style="left:94px;top:538px;width:604px;height:1px;background:#b7b7b7"></div>
<div class="t" style="left:98.00px;top:564px;font-size:15.5px;color:#434343;font-weight:bold;">Поставщик</div>
<div class="t" style="left:98.00px;top:592px;font-size:12.9px;color:#595959;font-weight:bold;">Имя контактного лица</div>
<div class="t" style="left:98.00px;top:612px;font-size:13.5px;color:#666666;-webkit-text-stroke:0.2px #666;">Название компании</div>
<div class="t" style="left:98.00px;top:633px;font-size:13.5px;color:#666666;-webkit-text-stroke:0.2px #666;">Улица, дом</div>
<div class="t" style="left:98.00px;top:654px;font-size:13.5px;color:#666666;-webkit-text-stroke:0.2px #666;">Город, почтовый индекс</div>
<div class="t" style="left:98.00px;top:674px;font-size:13.1px;color:#666666;-webkit-text-stroke:0.2px #666;">(+7) (000) 000-00-00</div>
<div class="t" style="left:98.00px;top:695px;font-size:13.1px;color:#666666;-webkit-text-stroke:0.2px #666;">no_reply@example.com</div>
<div class="t" style="left:442.00px;top:564px;font-size:15.2px;color:#434343;font-weight:bold;">Получатель</div>
<div class="t" style="left:442.00px;top:590px;font-size:12.9px;color:#595959;font-weight:bold;">Ваше имя</div>
<div class="t" style="left:442.00px;top:612px;font-size:13.5px;color:#666666;-webkit-text-stroke:0.2px #666;">Ваша компания</div>
<div class="t" style="left:442.00px;top:634px;font-size:12.9px;color:#666666;-webkit-text-stroke:0.2px #666;">ул. Улица, д. 1</div>
<div class="t" style="left:442.00px;top:654px;font-size:12.9px;color:#666666;-webkit-text-stroke:0.2px #666;">Город, 123456</div>
<div class="t" style="left:442.00px;top:675px;font-size:13.1px;color:#666666;-webkit-text-stroke:0.2px #666;">(+7) (000) 000-00-00</div>
<div class="t" style="left:442.00px;top:695px;font-size:13.1px;color:#666666;-webkit-text-stroke:0.2px #666;">no_reply@example.com</div>
<div class="a" style="left:94px;top:732.5px;width:604px;height:1px;background:#b7b7b7"></div>
<div class="a" style="left:46px;top:755px;width:701px;height:24px;overflow:hidden"><div class="a" style="left:-46px;top:-755px;width:800px;height:800px"><div class="t" style="left:98.00px;top:766px;font-size:15.2px;color:#2b3990;font-weight:bold;">Артикул</div>
<div class="t" style="left:187.50px;top:766px;font-size:15.2px;color:#2b3990;font-weight:bold;">Описание</div>
<div class="t" style="left:395.00px;top:766px;font-size:15.2px;color:#2b3990;font-weight:bold;">Количество</div>
<div class="t" style="left:551.00px;top:766px;font-size:15.2px;color:#2b3990;font-weight:bold;">Цена</div>
<div class="t" style="left:610.50px;top:766px;font-size:15.2px;color:#2b3990;font-weight:bold;">Стоимость</div>
</div></div>


  <!-- ============ TAB BAR ============ -->
  <div class="a" style="left:0;top:792px;width:1453px;height:37px;background:#f9fbfd;border-top:1px solid #e3e3e3"></div>
  <svg style="left:50px;top:800px" width="24" height="24" viewBox="50 800 24 24"><path d="M61.4 806 V817.2 M55.8 811.6 H67" fill="none" stroke="#444746" stroke-width="1.7"/></svg>
  <svg style="left:90px;top:800px" width="24" height="24" viewBox="90 800 24 24"><path d="M94.8 807.7 H108.9 M94.8 811.7 H108.9 M94.8 815.7 H108.9" fill="none" stroke="#444746" stroke-width="1.6"/></svg>
  <div class="a" style="left:133.5px;top:793px;width:180px;height:36px;background:#e1e9f7"></div>
  <div class="t" style="left:146px;top:804px;font-size:15.1px;font-weight:bold;color:#3066d4">Заказ на поставку</div>
  <div class="dd" style="left:292px;top:809px;border-top-color:#3066d4"></div>
  <div class="a" style="left:1403px;top:793px;width:46px;height:36px;background:#f1f3f4"></div>
  <svg style="left:1415px;top:803px" width="16" height="20" viewBox="1415 803 16 20"><path d="M1427.3 808.4 L1422.5 813.2 L1427.3 818" fill="none" stroke="#4d5156" stroke-width="1.7"/></svg>

  <!-- pointing finger emoji -->
  <svg style="left:1225px;top:65px" width="85" height="120" viewBox="1225 65 85 120">
    <defs>
      <radialGradient id="fg" cx="1276" cy="130" r="42" gradientUnits="userSpaceOnUse" gradientTransform="translate(1276 130) scale(1 1.55) translate(-1276 -130)">
        <stop offset="0" stop-color="#ffd04a"/>
        <stop offset="0.7" stop-color="#fdc73b"/>
        <stop offset="1" stop-color="#f3b020"/>
      </radialGradient>
    </defs>
    <path d="M1253.2 132.7 L1253 78.5 Q1253 71.8 1260 71.8 Q1266.8 71.8 1266.8 78.5 L1266.6 112.2
      C1268.5 110.2 1275 109.2 1277.5 112.2 C1279.5 111 1285 111 1287.5 113.6 C1290 113.2 1295 114.2 1297 116.5
      C1300.5 118 1303.5 123 1303.3 130 C1303.4 138 1302.5 148 1299.3 155.4 L1301.3 170.3
      C1296 176.5 1288 179.2 1279.5 179.2 C1270 179.2 1263.5 176.5 1259.7 172.8 L1261.2 159.4
      C1256 156 1251.5 152.5 1249.8 149.5 C1247 144 1246 140 1244.8 137.6 C1243 131 1242.5 128 1240.9 124.8
      C1238 119.5 1234.4 117 1234.4 112.9 C1234.4 109.5 1237 107.9 1239.9 107.9 C1245 107.9 1249.5 112 1250.8 116.8
      C1252.5 122 1253.2 128 1253.2 132.7 Z" fill="url(#fg)" stroke="#eaa214" stroke-width="0.8" stroke-opacity="0.6"/>
    <path d="M1253.1 112 L1253.2 133" stroke="#e9a318" stroke-width="1.2" opacity="0.6" fill="none"/>
    <path d="M1261.2 159.4 Q1280 163 1299.3 155.4" stroke="#eeaa1e" stroke-width="1" opacity="0.35" fill="none"/>
  </svg>
</div>
<div id="frame"></div>
</body></html>
